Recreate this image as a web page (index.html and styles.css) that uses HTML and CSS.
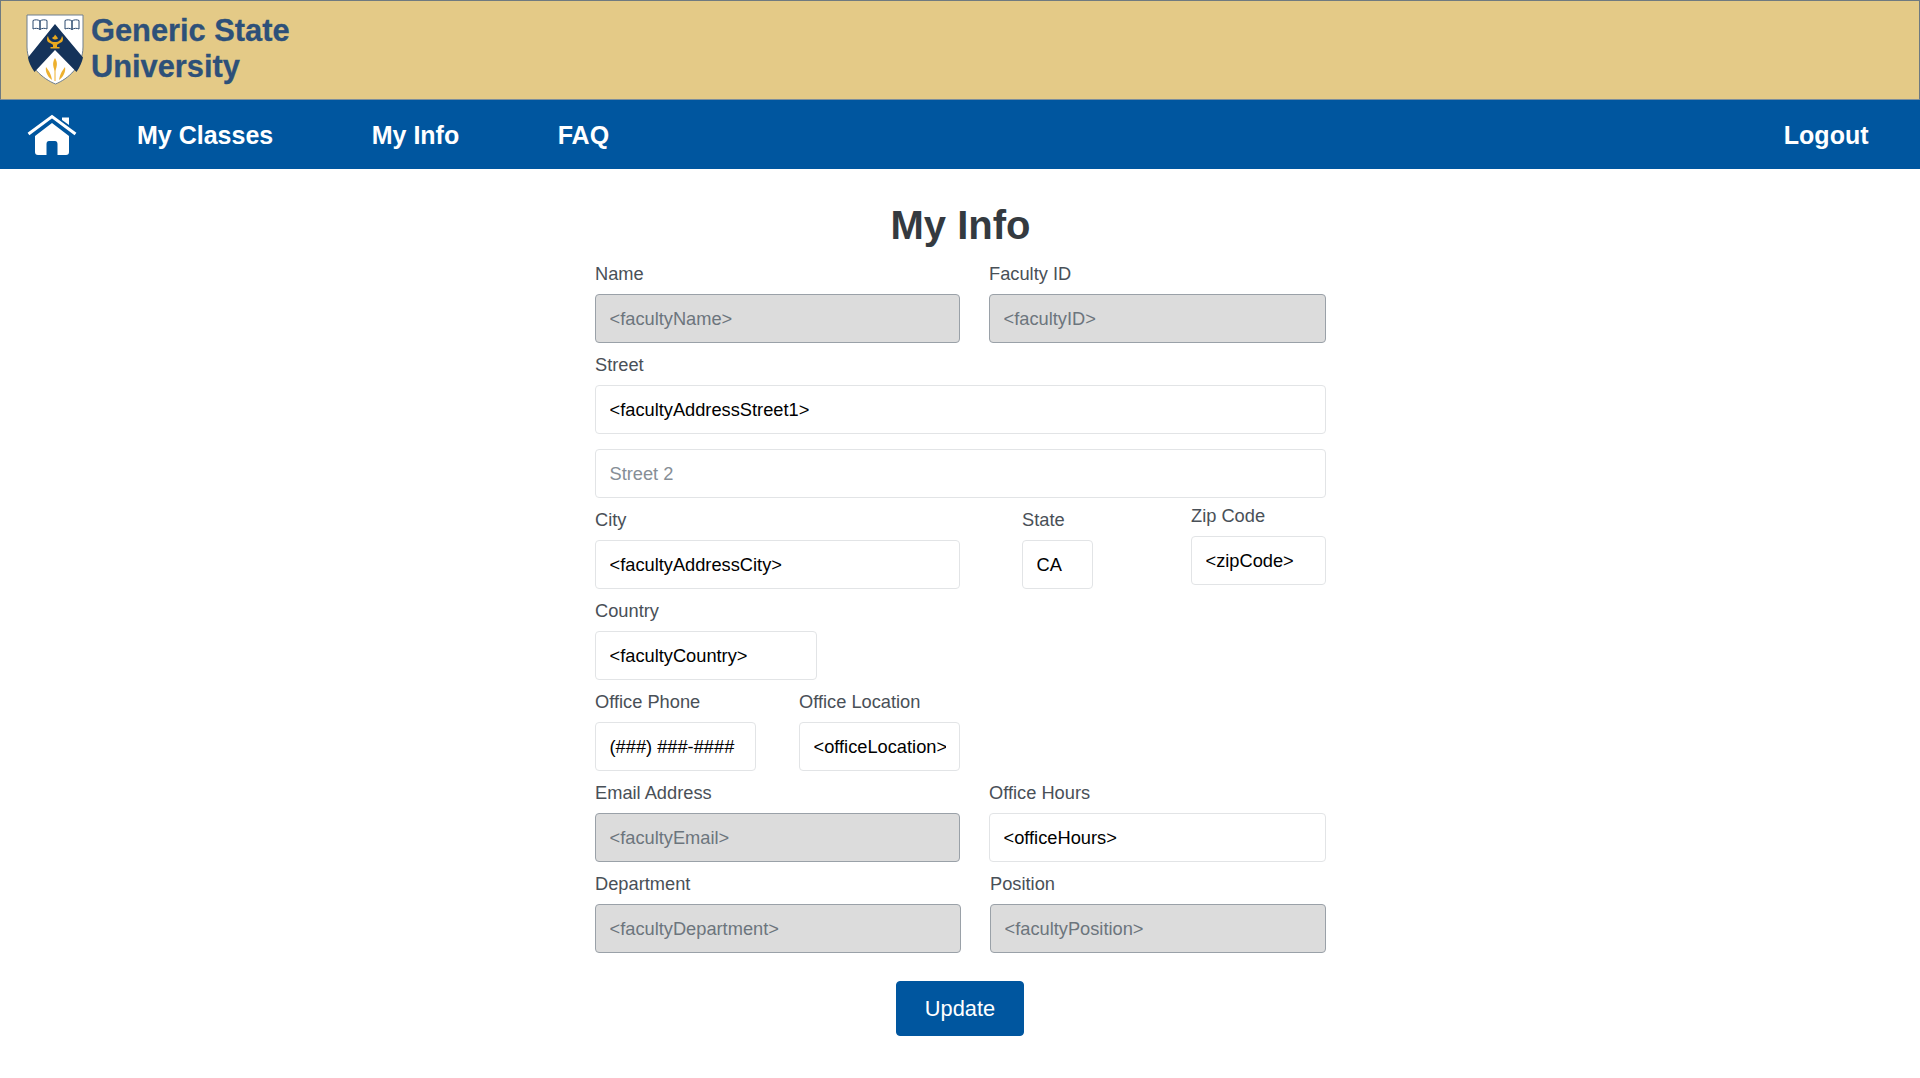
FILE: index.html
```html
<!DOCTYPE html>
<html lang="en">
<head>
<meta charset="utf-8">
<title>My Info</title>
<link rel="stylesheet" href="styles.css">
</head>
<body>
<header class="brand">
  <svg class="crest" viewBox="26 14 58 71" aria-hidden="true">
    <path d="M27 15H83V47C83 66 68 79 55.5 84C43 79 27 66 27 47Z" fill="#fff" stroke="#6f7f8f" stroke-width="1"/>
    <path d="M55 24L83 57.5C82 62 80 67 76.500 72L55 50L34.500 72C31 67 28.500 62 28 57.500Z" fill="#15335a"/>
    <path d="M33 20.500C35 19.500 38 19.500 40 21V29.500C38 28 35 28 33 29ZM40 21C42 19.500 45 19.500 47 20.500V29C45 28 42 28 40 29.500Z" fill="#fff" stroke="#2d4a6f" stroke-width="1"/>
    <path d="M65 20.500C67 19.500 70 19.500 72 21V29.500C70 28 67 28 65 29ZM72 21C74 19.500 77 19.500 79 20.500V29C77 28 74 28 72 29.500Z" fill="#fff" stroke="#2d4a6f" stroke-width="1"/>
    <path d="M48 36C49 40 51 42 55 42C59 42 61 40 62 36C64 39 63 42 60 43C58 44 57 44.500 57 45.500V47H59.500V48.500H50.500V47H53V45.500C53 44.500 52 44 50 43C47 42 46 39 48 36Z" fill="#e9a91f"/>
    <path d="M52 38C53 37 54.500 36.500 55 34.500C56 36 57.500 37 58 38.500C56 40 54 40 52 38Z" fill="#e9a91f"/>
    <path d="M55 58C57.500 62 57.500 66 55 71C52.500 66 52.500 62 55 58Z" fill="#edb02e"/>
    <path d="M55 68V81" stroke="#edb02e" stroke-width="1"/>
    <path d="M46 67C49 71 51 74 52 80C48 77 45 72 46 67Z" fill="#edb02e"/>
    <path d="M65 67C62 71 60 74 59 80C63 77 66 72 65 67Z" fill="#edb02e"/>
  </svg>
  <div class="wordmark">Generic State<br>University</div>
</header>
<nav class="nav">
  <a class="home" href="#" aria-label="Home">
    <svg viewBox="0 0 50 42" width="50" height="42" aria-hidden="true">
      <path d="M35 6V3.500H42V11Z" fill="#fff"/>
      <path d="M1.500 20L25 2.500L48.500 20" fill="none" stroke="#fff" stroke-width="3"/>
      <path d="M25 9L42 22V38C42 40 41 41 39 41H30.500V30C30.500 28 29.500 27 28 27H22C20.500 27 19.500 28 19.500 30V41H11C9 41 8 40 8 38V22Z" fill="#fff"/>
    </svg>
  </a>
  <a class="link first" href="#">My Classes</a>
  <a class="link" href="#">My Info</a>
  <a class="link" href="#">FAQ</a>
  <a class="link logout" href="#">Logout</a>
</nav>
<main class="page">
  <h1 class="title">My Info</h1>
  <form class="form">
    <div class="row">
      <div class="field w-half"><label>Name</label><input disabled value="&lt;facultyName&gt;"></div>
      <div class="field grow"><label>Faculty ID</label><input disabled value="&lt;facultyID&gt;"></div>
    </div>
    <div class="row">
      <div class="field grow"><label>Street</label><input value="&lt;facultyAddressStreet1&gt;"></div>
    </div>
    <div class="row second">
      <div class="field grow"><input placeholder="Street 2"></div>
    </div>
    <div class="row">
      <div class="field w-half"><label>City</label><input value="&lt;facultyAddressCity&gt;"></div>
      <div class="field w-state"><label>State</label><input value="CA"></div>
      <div class="field w-zip"><label>Zip Code</label><input value="&lt;zipCode&gt;"></div>
    </div>
    <div class="row">
      <div class="field w-country"><label>Country</label><input value="&lt;facultyCountry&gt;"></div>
    </div>
    <div class="row">
      <div class="field w-phone"><label>Office Phone</label><input value="(###) ###-####"></div>
      <div class="field w-location"><label>Office Location</label><input value="&lt;officeLocation&gt;"></div>
    </div>
    <div class="row">
      <div class="field w-half"><label>Email Address</label><input disabled value="&lt;facultyEmail&gt;"></div>
      <div class="field grow"><label>Office Hours</label><input value="&lt;officeHours&gt;"></div>
    </div>
    <div class="row">
      <div class="field w-dept"><label>Department</label><input disabled value="&lt;facultyDepartment&gt;"></div>
      <div class="field grow"><label>Position</label><input disabled value="&lt;facultyPosition&gt;"></div>
    </div>
    <div class="actions"><button class="update" type="button">Update</button></div>
  </form>
</main>
</body>
</html>
```
FILE: styles.css
```css
* { box-sizing: border-box; }
html, body { margin: 0; height: 100%; overflow: hidden; }
body { font-family: "Liberation Sans", Arial, sans-serif; color: #495057; background: #fff; }

.brand {
  height: 100px;
  display: flex;
  align-items: center;
  gap: 7px;
  padding: 0 0 2px 25px;
  background: #e4ca87;
  border: 1px solid #6f7a80;
  border-bottom-color: #7d8f9c;
}
.crest { width: 58px; height: 71px; flex: none; }
.wordmark {
  font-size: 30.8px;
  line-height: 36px;
  font-weight: 700;
  color: #2d5079;
  -webkit-text-stroke: 0.3px #2d5079;
  margin-top: -1px;
}

.nav {
  height: 69px;
  display: flex;
  align-items: center;
  padding: 0 51.5px 0 27px;
  background: #00569f;
}
.home { display: flex; margin-top: 1px; width: 50px; }
.link {
  color: #fff;
  font-size: 25px;
  font-weight: 700;
  text-decoration: none;
  margin-left: 98.5px;
  padding-top: 2px;
}
.link.first { margin-left: 60px; }
.link.logout { margin-left: auto; }

.page { width: 732px; padding-left: 1px; margin: 0 auto; }
.title {
  margin: 0;
  padding-top: 33px;
  height: 104px;
  text-align: center;
  font-size: 40px;
  line-height: 46px;
  font-weight: 700;
  color: #343a40;
}
.form { display: flex; flex-direction: column; gap: 8px; margin-top: -13px; }
.row { display: flex; align-items: flex-start; gap: 29px; }
.row.second { margin-top: 7px; }
.field { display: flex; flex-direction: column; min-width: 0; }
.field label { font-size: 18.25px; line-height: 27px; margin-bottom: 7px; color: #495057; }
.field input {
  width: 100%;
  height: 49px;
  padding: 0 13.5px;
  font-family: inherit;
  font-size: 18.25px;
  color: #000;
  background: #fff;
  border: 1px solid #e2e4e6;
  border-radius: 4px;
  outline: none;
}
.field input::placeholder { color: #868e96; opacity: 1; }
.field input:disabled {
  color: #6c757d;
  -webkit-text-fill-color: #6c757d;
  background: #dcdcdc;
  border-color: #9aa1a8;
  opacity: 1;
}
.grow { flex: 1; }
.w-half { width: 365px; flex: none; }
.w-dept { width: 366px; flex: none; }
.w-state { width: 71px; flex: none; margin-left: 33px; }
.w-zip { width: 135px; flex: none; margin-left: auto; margin-top: -4px; }
.w-country { width: 222px; flex: none; }
.w-phone { width: 161px; flex: none; }
.w-location { width: 161px; flex: none; margin-left: 14px; }

.actions { display: flex; justify-content: center; margin-top: 20px; padding-right: 1px; }
.update {
  width: 128px;
  height: 55px;
  border: 1px solid #00569f;
  border-radius: 4px;
  background: #00569f;
  color: #fff;
  font-family: inherit;
  font-size: 21.8px;
}
```
